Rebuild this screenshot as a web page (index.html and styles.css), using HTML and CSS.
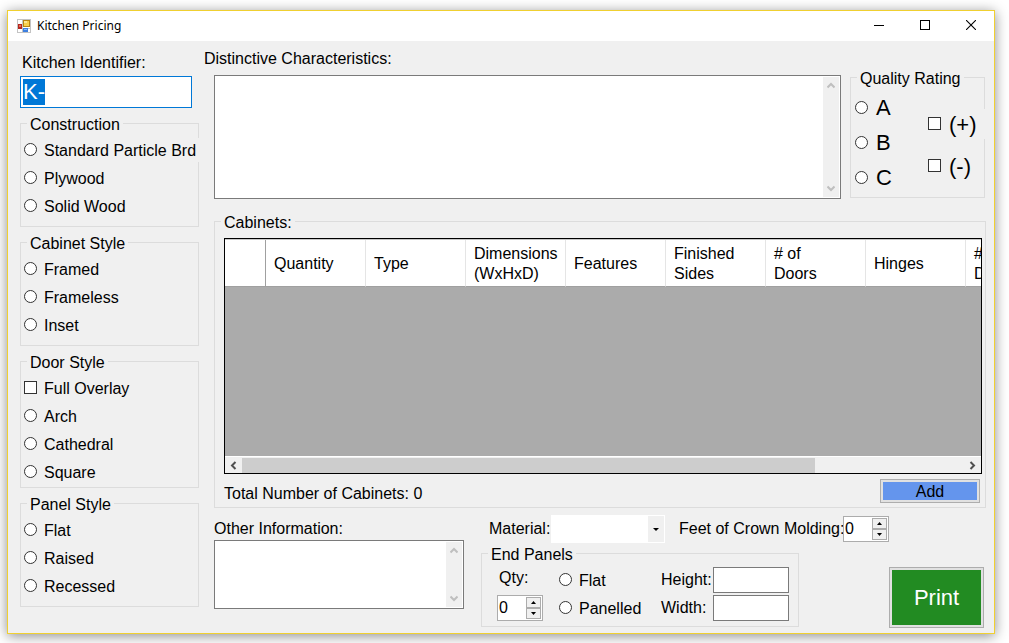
FILE: index.html
```html
<!DOCTYPE html>
<html lang="en">
<head>
<meta charset="utf-8">
<title>Kitchen Pricing</title>
<link rel="stylesheet" href="styles.css">
</head>
<body>
<div class="window">
  <header class="titlebar">
    <svg class="app-icon" width="14" height="14" viewBox="0 0 14 14" aria-hidden="true">
      <rect x="0.5" y="0.5" width="13" height="13" fill="#fff" stroke="#c3c3c3"/>
      <path d="M5.5 1v12M1 9.5h12" stroke="#c3c3c3"/>
      <rect x="1" y="5" width="4" height="5" fill="#b3261c"/>
      <rect x="2" y="6" width="2" height="2" fill="#e8685a"/>
      <rect x="6.5" y="1.5" width="6" height="6" fill="#f8cf4c" stroke="#b98512"/>
      <rect x="7" y="2" width="3" height="2" fill="#fde694"/>
      <rect x="6" y="9" width="5" height="4" fill="#3d7fe0"/>
      <rect x="7" y="10" width="3" height="1" fill="#8bb8f6"/>
    </svg>
    <h1 class="title">Kitchen Pricing</h1>
    <div class="window-buttons">
      <button class="window-button" aria-label="Minimize"><svg width="10" height="10" viewBox="0 0 10 10"><path d="M0 5.5h10" stroke="#000"/></svg></button>
      <button class="window-button" aria-label="Maximize"><svg width="10" height="10" viewBox="0 0 10 10"><rect x="0.5" y="0.5" width="9" height="9" fill="none" stroke="#000"/></svg></button>
      <button class="window-button" aria-label="Close"><svg width="10" height="10" viewBox="0 0 10 10"><path d="M0 0l10 10M10 0L0 10" stroke="#000" stroke-width="1.1"/></svg></button>
    </div>
  </header>

  <form class="content">
    <div class="sidebar">
      <label class="identifier-label" for="identifier">Kitchen Identifier:</label>
      <input class="identifier" id="identifier" type="text" value="K-" autofocus>

      <fieldset class="group">
        <legend>Construction</legend>
        <label class="option option-wide"><input type="radio" name="construction"><span>Standard Particle Brd</span></label>
        <label class="option"><input type="radio" name="construction"><span>Plywood</span></label>
        <label class="option"><input type="radio" name="construction"><span>Solid Wood</span></label>
      </fieldset>

      <fieldset class="group">
        <legend>Cabinet Style</legend>
        <label class="option"><input type="radio" name="cabinet"><span>Framed</span></label>
        <label class="option"><input type="radio" name="cabinet"><span>Frameless</span></label>
        <label class="option"><input type="radio" name="cabinet"><span>Inset</span></label>
      </fieldset>

      <fieldset class="group group-door">
        <legend>Door Style</legend>
        <label class="option"><input type="checkbox" name="overlay"><span>Full Overlay</span></label>
        <label class="option"><input type="radio" name="door"><span>Arch</span></label>
        <label class="option"><input type="radio" name="door"><span>Cathedral</span></label>
        <label class="option"><input type="radio" name="door"><span>Square</span></label>
      </fieldset>

      <fieldset class="group">
        <legend>Panel Style</legend>
        <label class="option"><input type="radio" name="panel"><span>Flat</span></label>
        <label class="option"><input type="radio" name="panel"><span>Raised</span></label>
        <label class="option"><input type="radio" name="panel"><span>Recessed</span></label>
      </fieldset>
    </div>

    <div class="main">
      <div class="top-row">
        <div class="characteristics">
          <label for="characteristics">Distinctive Characteristics:</label>
          <div class="memo memo-inset">
            <textarea id="characteristics"></textarea>
            <div class="vscroll">
              <svg width="8" height="7" viewBox="0 0 8 7"><path d="M0.5 5.5L4 2l3.5 3.5" fill="none" stroke="#bfbfbf" stroke-width="2"/></svg>
              <svg width="8" height="7" viewBox="0 0 8 7"><path d="M0.5 1.5L4 5l3.5-3.5" fill="none" stroke="#bfbfbf" stroke-width="2"/></svg>
            </div>
          </div>
        </div>

        <fieldset class="group quality">
          <legend>Quality Rating</legend>
          <div class="quality-body">
            <div class="grades">
              <label class="option grade"><input type="radio" name="grade"><span>A</span></label>
              <label class="option grade"><input type="radio" name="grade"><span>B</span></label>
              <label class="option grade"><input type="radio" name="grade"><span>C</span></label>
            </div>
            <div class="signs">
              <label class="option sign sign-plus"><input type="checkbox" name="plus"><span>(+)</span></label>
              <label class="option sign"><input type="checkbox" name="minus"><span>(-)</span></label>
            </div>
          </div>
        </fieldset>
      </div>

      <fieldset class="group cabinets">
        <legend>Cabinets:</legend>
        <div class="cabinets-body">
          <div class="data-grid">
            <div class="grid-view">
              <table>
                <thead>
                  <tr>
                    <td class="corner"></td>
                    <th>Quantity</th>
                    <th>Type</th>
                    <th>Dimensions<br>(WxHxD)</th>
                    <th>Features</th>
                    <th>Finished<br>Sides</th>
                    <th># of<br>Doors</th>
                    <th>Hinges</th>
                    <th>#<br>D</th>
                  </tr>
                </thead>
              </table>
            </div>
            <div class="hscroll">
              <svg width="17" height="15" viewBox="0 0 17 15"><path d="M10.5 4L7 7.5l3.5 3.5" fill="none" stroke="#505050" stroke-width="2"/></svg>
              <div class="hscroll-track"><div class="hscroll-thumb"></div></div>
              <svg width="17" height="15" viewBox="0 0 17 15"><path d="M6.5 4L10 7.5 6.5 11" fill="none" stroke="#505050" stroke-width="2"/></svg>
            </div>
          </div>
          <div class="totals">
            <span>Total Number of Cabinets: 0</span>
            <button type="button" class="button add">Add</button>
          </div>
        </div>
      </fieldset>

      <div class="bottom-row">
        <div class="other">
          <label for="other">Other Information:</label>
          <div class="memo memo-short">
            <textarea id="other"></textarea>
            <div class="vscroll">
              <svg width="8" height="7" viewBox="0 0 8 7"><path d="M0.5 5.5L4 2l3.5 3.5" fill="none" stroke="#bfbfbf" stroke-width="2"/></svg>
              <svg width="8" height="7" viewBox="0 0 8 7"><path d="M0.5 1.5L4 5l3.5-3.5" fill="none" stroke="#bfbfbf" stroke-width="2"/></svg>
            </div>
          </div>
        </div>

        <div class="details">
          <div class="material-row">
            <label class="material-label" for="material">Material:</label>
            <div class="combo">
              <select id="material"><option></option></select>
              <svg class="combo-arrow" width="16" height="26" viewBox="0 0 16 26"><rect width="16" height="26" fill="#f0f0f0"/><path d="M5 12h6L8 15z" fill="#000"/></svg>
            </div>
            <label class="crown-label" for="crown">Feet of Crown Molding:</label>
            <div class="spinner">
              <input id="crown" type="text" inputmode="numeric" value="0">
              <div class="spinner-buttons">
                <button type="button" aria-label="More feet"><svg width="5" height="3" viewBox="0 0 5 3"><path d="M0 3h5L2.5 0z"/></svg></button>
                <button type="button" aria-label="Fewer feet"><svg width="5" height="3" viewBox="0 0 5 3"><path d="M0 0h5L2.5 3z"/></svg></button>
              </div>
            </div>
          </div>

          <div class="panel-row">
            <fieldset class="group end-panels">
              <legend>End Panels</legend>
              <div class="end-grid">
                <label class="qty-label" for="qty">Qty:</label>
                <label class="option"><input type="radio" name="endpanel"><span>Flat</span></label>
                <label for="height">Height:</label>
                <input class="field" id="height" type="text">
                <div class="spinner">
                  <input id="qty" type="text" inputmode="numeric" value="0">
                  <div class="spinner-buttons">
                    <button type="button" aria-label="More panels"><svg width="5" height="3" viewBox="0 0 5 3"><path d="M0 3h5L2.5 0z"/></svg></button>
                    <button type="button" aria-label="Fewer panels"><svg width="5" height="3" viewBox="0 0 5 3"><path d="M0 0h5L2.5 3z"/></svg></button>
                  </div>
                </div>
                <label class="option"><input type="radio" name="endpanel"><span>Panelled</span></label>
                <label for="width">Width:</label>
                <input class="field" id="width" type="text">
              </div>
            </fieldset>
            <button type="button" class="button print">Print</button>
          </div>
        </div>
      </div>
    </div>
  </form>
</div>
<script src="main.js"></script>
</body>
</html>
```

FILE: styles.css
```css
* { box-sizing: border-box; }

body {
  margin: 0;
  padding: 10px 14px 9px 7px;
  min-height: 100vh;
  display: flex;
  background: #fff;
  color: #000;
  font: 16px/20px "Liberation Sans", Arial, sans-serif;
}

input, select, textarea, button { font: inherit; color: inherit; margin: 0; }

.window {
  flex: 1;
  min-width: 0;
  display: flex;
  flex-direction: column;
  border: 1px solid #f0d030;
  background: #f0f0f0;
  box-shadow: 0 2px 12px rgba(0, 0, 0, 0.45);
}

.titlebar {
  display: flex;
  align-items: center;
  height: 30px;
  padding-left: 9px;
  background: #fff;
}
.title {
  flex: 1;
  margin: 0 0 0 6px;
  font: 12px/16px "Noto Sans", "Open Sans", sans-serif;
}
.window-buttons { display: flex; }
.window-button {
  display: flex;
  align-items: center;
  justify-content: center;
  width: 46px;
  height: 30px;
  padding: 0 0 2px;
  border: 0;
  background: none;
}

.content {
  flex: 1;
  display: grid;
  grid-template-columns: 179px minmax(0, 1fr);
  column-gap: 5px;
  padding: 8px 8px 5px 12px;
}

.sidebar {
  display: flex;
  flex-direction: column;
  gap: 6px;
  padding-top: 4px;
}
.identifier-label { padding-left: 2px; margin-bottom: -3px; }
.identifier {
  width: 172px;
  height: 32px;
  padding: 0 2px;
  border: 1px solid #0078d7;
  outline: 0;
  background: #fff;
  font-size: 22px;
  line-height: 25px;
}
.identifier::selection { background: #0078d7; color: #fff; }

.group {
  min-width: 0;
  margin: 0;
  padding: 3px 3px 6px;
  border: 1px solid #dcdcdc;
}
.group legend {
  height: 19px;
  margin-left: 3px;
  padding: 0 3px;
  line-height: 22px;
}
.group-door { padding-bottom: 1px; }

.option {
  display: flex;
  align-items: center;
  gap: 7px;
  height: 28px;
}
.option-wide {
  position: relative;
  height: 24px;
  margin: 2px -4px 2px 0;
  background: #f0f0f0;
  white-space: nowrap;
}
.option span { padding-top: 1px; }
.option input {
  appearance: none;
  flex: none;
  width: 13px;
  height: 13px;
  margin-bottom: 1px;
  border: 1px solid #333;
  background: #fff;
}
.option input[type="radio"] { border-radius: 50%; }

.main { display: flex; flex-direction: column; min-width: 0; }

.top-row {
  display: grid;
  grid-template-columns: minmax(0, 1fr) 135px;
  column-gap: 9px;
  padding-right: 1px;
}
.characteristics { display: flex; flex-direction: column; gap: 6px; }
.memo {
  flex: 1;
  display: flex;
  padding: 1px;
  border: 1px solid #7a7a7a;
  background: #fff;
}
.memo-inset { margin-left: 10px; min-height: 124px; }
.memo-short { min-height: 69px; flex: none; }
.memo textarea {
  flex: 1;
  min-width: 0;
  border: 0;
  outline: 0;
  padding: 1px;
  resize: none;
  background: #fff;
}
.vscroll {
  display: flex;
  flex-direction: column;
  align-items: center;
  justify-content: space-between;
  width: 16px;
  padding: 5px 0;
  background: #f0f0f0;
}

.quality { margin: 19px 0 1px; padding: 3px 0 2px 4px; }
.quality legend { margin-left: 2px; }
.quality-body { display: flex; }
.grades { flex: 1; }
.grade, .sign { font-size: 22px; line-height: 30px; gap: 8px; }
.grade { height: 35px; }
.signs {
  display: flex;
  flex-direction: column;
  gap: 12px;
  width: 57px;
  padding-top: 19px;
  margin-right: -1px;
}
.sign { height: 30px; }
.sign-plus { position: relative; background: #f0f0f0; }

.cabinets {
  flex: 1;
  display: flex;
  flex-direction: column;
  margin: 13px 0 0 10px;
  padding: 7px 3px 4px 9px;
}
.cabinets legend { margin-left: -3px; }
.cabinets-body { flex: 1; display: flex; flex-direction: column; }
.data-grid {
  flex: 1;
  display: flex;
  flex-direction: column;
  min-height: 160px;
  border: 1px solid #000;
  background: #ababab;
}
.grid-view { flex: 1; overflow: hidden; border-top: 1px solid #c8c8c8; }
.grid-view table {
  width: 841px;
  table-layout: fixed;
  border-collapse: separate;
  border-spacing: 0;
  background: #fff;
}
.grid-view th, .grid-view td {
  width: 100px;
  height: 47px;
  padding: 4px 8px 2px;
  border-right: 1px solid #e5e5e5;
  border-bottom: 1px solid #a0a0a0;
  font-weight: normal;
  text-align: left;
}
.grid-view .corner { width: 41px; border-right-color: #a0a0a0; }
.hscroll {
  display: flex;
  height: 17px;
  padding: 1px 0;
  border-top: 1px solid #fff;
  background: #f0f0f0;
}
.hscroll svg { flex: none; }
.hscroll-track { flex: 1; }
.hscroll-thumb { width: 79.4%; height: 15px; background: #cdcdcd; }

.totals {
  display: flex;
  align-items: center;
  justify-content: space-between;
  height: 24px;
  margin-top: 5px;
  padding-right: 2px;
}
.totals span { padding-top: 5px; }
.button {
  padding: 0;
  border: 1px solid #adadad;
  box-shadow: inset 0 0 0 2px #e1e1e1;
}
.add { width: 100px; height: 24px; padding-top: 2px; background: #6495ed; }
.print {
  width: 95px;
  height: 61px;
  background: #228b22;
  color: #fff;
  font-size: 22px;
}

.bottom-row {
  display: grid;
  grid-template-columns: 250px minmax(0, 1fr);
  column-gap: 17px;
  margin-left: 10px;
}
.other {
  display: flex;
  flex-direction: column;
  gap: 1px;
  padding-top: 11px;
}
.details { padding: 7px 2px 0 0; }
.material-row { display: flex; align-items: center; padding-left: 8px; }
.material-label { width: 62px; }
.combo { position: relative; width: 114px; height: 28px; }
.combo select {
  appearance: none;
  display: block;
  width: 100%;
  height: 100%;
  border: 0;
  border-radius: 0;
  background: #fff;
}
.combo-arrow { position: absolute; top: 1px; right: 1px; pointer-events: none; }
.crown-label { width: 164px; margin-left: 14px; white-space: nowrap; }

.spinner {
  display: flex;
  width: 46px;
  height: 26px;
  padding: 1px;
  border: 1px solid #acacac;
  background: #fff;
}
.spinner input {
  flex: 1;
  min-width: 0;
  padding: 0;
  border: 0;
  outline: 0;
  background: #fff;
}
.spinner-buttons { display: flex; flex-direction: column; width: 15px; }
.spinner-buttons button {
  flex: 1;
  display: flex;
  align-items: center;
  justify-content: center;
  padding: 0;
  border: 1px solid #acacac;
  background: #f0f0f0;
}

.panel-row { display: flex; justify-content: space-between; align-items: flex-end; margin-top: 1px; }
.end-panels { width: 318px; padding: 4px 9px 5px 15px; margin-bottom: 1px; }
.end-panels legend { margin-left: -9px; }
.end-grid {
  display: grid;
  grid-template-columns: 46px 1fr 52px 76px;
  grid-auto-rows: 26px;
  row-gap: 2px;
  align-items: center;
}
.end-grid .option { height: 26px; margin-left: 16px; }
.qty-label { padding: 0 0 4px 2px; }
.field {
  width: 100%;
  height: 26px;
  padding: 0 2px;
  border: 1px solid #7a7a7a;
  background: #fff;
}
```

FILE: main.js
```js
const identifier = document.getElementById("identifier");
identifier.focus();
identifier.select();
```
